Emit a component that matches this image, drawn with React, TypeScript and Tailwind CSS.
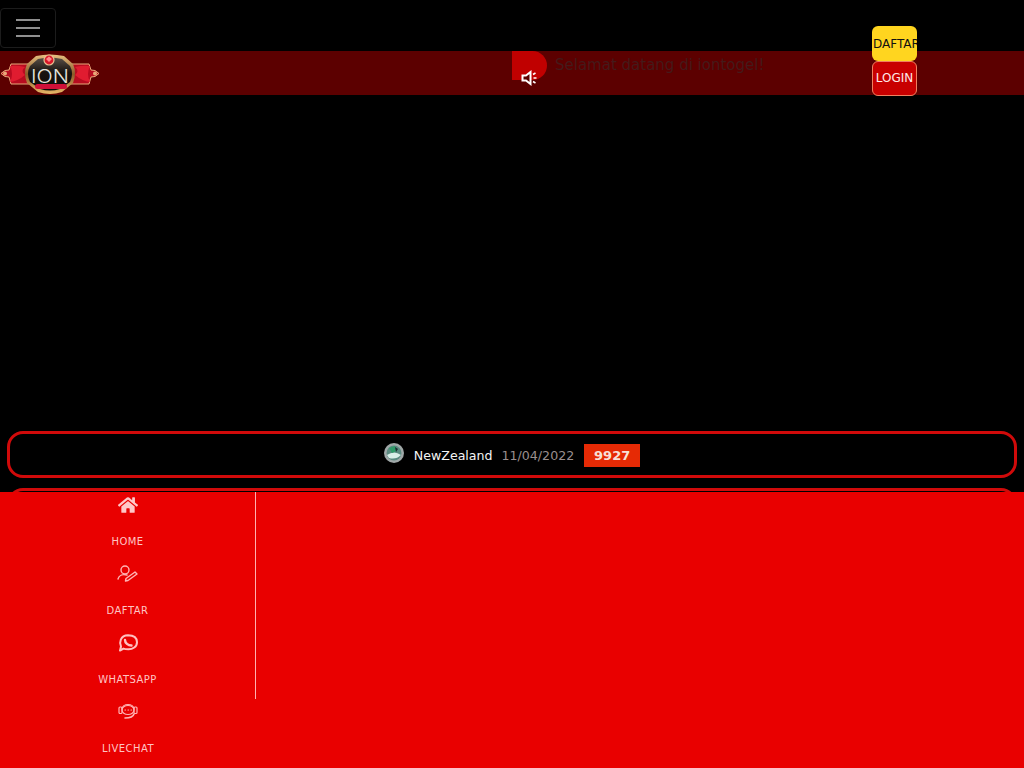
import React from "react";
import { FaHome } from "react-icons/fa";

function Logo() {
  return (
    <svg width="100" height="44" viewBox="0 0 100 44">
      <defs>
        <linearGradient id="gold" x1="0" y1="0" x2="0" y2="1">
          <stop offset="0" stopColor="#e8c080" />
          <stop offset="0.5" stopColor="#8a5a28" />
          <stop offset="1" stopColor="#e8b868" />
        </linearGradient>
        <linearGradient id="dark" x1="0" y1="0" x2="0" y2="1">
          <stop offset="0" stopColor="#5a5048" />
          <stop offset="0.45" stopColor="#181410" />
          <stop offset="1" stopColor="#0c0a08" />
        </linearGradient>
      </defs>
      <path d="M1 22.5 L5 19.5 L9 19 L11 13 L30 13 L30 33 L11 33 L9 26 L5 25.5 Z" fill="#b80c20" stroke="#e8a878" strokeWidth="1" />
      <path d="M99 22.5 L95 19.5 L91 19 L89 13 L70 13 L70 33 L89 33 L91 26 L95 25.5 Z" fill="#b80c20" stroke="#e8a878" strokeWidth="1" />
      <path d="M10 15 Q17 14 25 16 Q20 20 25 24 Q18 30 10 31 Q14 23 10 15 Z" fill="#e01c30" />
      <path d="M90 15 Q83 14 75 16 Q80 20 75 24 Q82 30 90 31 Q86 23 90 15 Z" fill="#e01c30" />
      <circle cx="5" cy="22.5" r="2" fill="#e8a878" />
      <circle cx="95" cy="22.5" r="2" fill="#e8a878" />
      <path d="M36 5 Q50 2 64 5 L73 13 Q77 22 73 32 L62 41 Q50 45 38 41 L27 32 Q23 22 27 13 Z" fill="url(#gold)" />
      <path d="M38 8 Q50 5 62 8 L70 15 Q74 22 70 31 L60 38 Q50 41 40 38 L30 31 Q26 22 30 15 Z" fill="url(#dark)" />
      <circle cx="49" cy="9" r="5" fill="#d8182a" stroke="#e8c090" strokeWidth="1.2" />
      <path d="M46 8 L49 5.5 L52 8 L49 11 Z" fill="#ff8a8a" />
      <text x="50" y="32" textAnchor="middle" fontFamily="Inter, sans-serif" fontWeight="300" fontSize="18" textLength="38" lengthAdjust="spacingAndGlyphs" fill="#e4e4dc">ION</text>
      <rect x="35" y="33" width="32" height="5" rx="2.5" fill="#d01038" />
    </svg>
  );
}

function Speaker() {
  return (
    <svg width="17" height="16" viewBox="0 0 17 16" fill="none" stroke="#fff" strokeWidth="2">
      <path d="M1.5 5.5 H5 L9.5 2 V14 L5 10.5 H1.5 Z" fill="#5c0000" />
      <path d="M12 4.5 L14.5 3 M12.5 8 H15.5 M12 11.5 L14.5 13" strokeWidth="1.6" />
    </svg>
  );
}

function UserPen() {
  return (
    <svg width="21" height="17" viewBox="0 0 21 17" fill="none" stroke="#ffb4b4" strokeWidth="1.4" strokeLinecap="round" strokeLinejoin="round">
      <circle cx="8" cy="5" r="4" />
      <path d="M1 14 C2 10 6 9 10 10" />
      <path d="M9 13.5 L18 7 L20 9 L11 15.5 L8.5 16 Z" />
    </svg>
  );
}

function Whatsapp() {
  return (
    <svg width="20" height="18" viewBox="0 0 20 18" fill="none" stroke="#ffc0c0" strokeWidth="2" strokeLinecap="round" strokeLinejoin="round">
      <path d="M2 16.5 L3 12.5 C1.2 9 2 1.5 10 1.3 C18 1.5 19 6 19 8.2 C19 13 14.5 15.2 10.5 15.2 C8 15.2 6.5 15 5.5 14.6 Z" />
      <path d="M7 6 C7 9 10 11.5 13.5 11.5" strokeWidth="2.4" />
    </svg>
  );
}

function Agent() {
  return (
    <svg width="20" height="17" viewBox="0 0 20 17" fill="none" stroke="#ffb4b4" strokeWidth="1.2" strokeLinecap="round">
      <path d="M4 6 C4 0 16 0 16 6" />
      <ellipse cx="10" cy="7" rx="6" ry="4.5" />
      <rect x="1" y="4" width="3" height="6.5" rx="1" />
      <rect x="16" y="4" width="3" height="6.5" rx="1" />
      <path d="M7 7 H7.5 M10 7 H10.5 M13 7 H13.5" />
      <path d="M16 11 C15 14.5 12 15 7 15" strokeWidth="1.6" />
    </svg>
  );
}

const items = [
  { label: "HOME", icon: <FaHome size={20} color="#ffc8c8" /> },
  { label: "DAFTAR", icon: <UserPen /> },
  { label: "WHATSAPP", icon: <Whatsapp /> },
];

function NavItem({ label, icon }: { label: string; icon: React.ReactNode }) {
  return (
    <div className="flex h-[69px] w-full flex-col items-center">
      <div className="flex h-[25px] items-center justify-center">{icon}</div>
      <span className="mt-[17px] text-[10px] leading-[15px] tracking-[0.45px] text-[#ffc4c4]">{label}</span>
    </div>
  );
}

export default function App() {
  return (
    <div className="min-h-[768px] overflow-hidden bg-black font-['DejaVu_Sans',sans-serif]">
      <div className="h-[51px] pt-2">
        <button className="flex h-10 w-14 items-center justify-center rounded border border-[#1c1c1c]">
          <span className="flex w-6 flex-col gap-[6px]">
            <span className="h-[2px] bg-[#8f8f8f]" />
            <span className="h-[2px] bg-[#8f8f8f]" />
            <span className="h-[2px] bg-[#8f8f8f]" />
          </span>
        </button>
      </div>

      <div className="relative flex h-11 bg-[#5c0000]">
        <div className="w-[512px]">
          <Logo />
        </div>
        <div className="relative flex-1">
          <div className="h-[29px] w-[35px] rounded-r-[15px] bg-[#c00000]" />
          <div className="absolute left-[9px] top-[19px]">
            <Speaker />
          </div>
          <span className="absolute left-[43px] top-[2px] text-[15px] leading-6 text-[#451a1a]">Selamat datang di iontogel!</span>
        </div>
        <div className="absolute left-[872px] top-[-25px] flex w-[45px] flex-col">
          <button className="h-[35px] overflow-hidden whitespace-nowrap rounded-md bg-[#ffd51f] pl-px text-left text-xs text-[#111]">DAFTAR</button>
          <button className="h-[35px] rounded-md border border-[#f08060] bg-[#c80000] pb-[2px] text-xs text-[#ffe8e8]">LOGIN</button>
        </div>
      </div>

      <div className="flex flex-col gap-[10px] px-[7px] pt-[336px]">
        <div className="flex h-[47px] items-center justify-center rounded-[16px] border-[3px] border-[#d00a0a] text-[12.6px]">
          <svg width="20" height="20" viewBox="0 0 20 20" className="mb-[4px] mr-[10px]">
            <circle cx="10" cy="10" r="10" fill="#a0a8a8" />
            <circle cx="10" cy="10" r="7.5" fill="#5a8a80" />
            <path d="M3 12 Q10 7 17 12 Q12 17 5 15 Z" fill="#d8efe8" />
            <path d="M5 5 L11 3 L13 8 L8 10 Z" fill="#2e9a68" />
            <path d="M11 4 L14 6 L12 9 Z" fill="#1a2a30" />
          </svg>
          <span className="mr-[9px] mt-[3px] text-[#f4f4f4]">NewZealand</span>
          <span className="mr-[10px] mt-[3px] text-[#9a8f8f]">11/04/2022</span>
          <span className="mt-[2px] flex h-[23px] w-14 items-center justify-center bg-[#e62a05] text-[13px] font-bold text-[#f8e0d8]">9927</span>
        </div>
        <div className="h-[47px] rounded-[16px] border-[3px] border-[#d00a0a]" />
      </div>

      <div className="fixed inset-x-0 bottom-0 h-[276px] bg-[#e90000]">
        <div className="w-64">
          <div className="border-r border-[#ffb0b0]">
            {items.map((i) => (
              <NavItem key={i.label} {...i} />
            ))}
          </div>
          <NavItem label="LIVECHAT" icon={<Agent />} />
        </div>
      </div>
    </div>
  );
}
